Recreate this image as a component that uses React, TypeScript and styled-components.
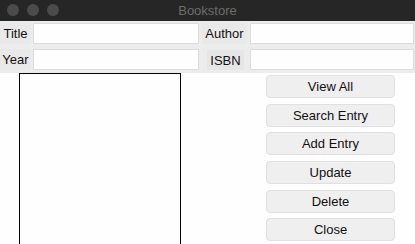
import React from "react"
import styled, { createGlobalStyle } from "styled-components"

const GlobalStyle = createGlobalStyle`
  html, body {
    margin: 0;
    padding: 0;
    background: #fefefe;
    overflow: hidden;
  }
  body {
    font-family: "Liberation Sans", Arial, sans-serif;
    font-size: 13px;
    color: #111;
  }
`

const buttons = ["View All", "Search Entry", "Add Entry", "Update", "Delete", "Close"]

const App = () => {
  return (
    <Window>
      <GlobalStyle />
      <TitleBar>
        <Lights>
          <Light />
          <Light />
          <Light />
        </Lights>
        <WindowTitle>Bookstore</WindowTitle>
      </TitleBar>
      <Form>
        <Label>Title</Label>
        <Entry />
        <Label>Author</Label>
        <Entry />
        <Label>Year</Label>
        <Entry />
        <Label boxed>ISBN</Label>
        <Entry />
      </Form>
      <Body>
        <ListBox />
        <ButtonColumn>
          {buttons.map(b => (
            <Button key={b}>{b}</Button>
          ))}
        </ButtonColumn>
      </Body>
    </Window>
  )
}

export default App

const Window = styled.div`
  width: 415px;
  height: 244px;
  overflow: hidden;
  background: #fefefe;
`

const TitleBar = styled.div`
  position: relative;
  height: 21px;
  background: #262626;
  display: flex;
  align-items: center;
  justify-content: center;
`

const Lights = styled.div`
  position: absolute;
  left: 7px;
  top: 4px;
  display: flex;
  gap: 8px;
`

const Light = styled.span`
  width: 12px;
  height: 12px;
  border-radius: 50%;
  background: #4b4b4b;
`

const WindowTitle = styled.span`
  color: #6c6c6c;
  font-size: 13px;
  line-height: 21px;
`

const Form = styled.div`
  display: grid;
  grid-template-columns: 31px 165px 45px 164px;
  grid-template-rows: 21px 21px;
  column-gap: 3px;
  row-gap: 5px;
  padding: 2px 2px 3px 0;
  background: #ececec;

  & > :nth-child(2),
  & > :nth-child(6) {
    margin-left: -1px;
  }
`

const Label = styled.div<{ boxed?: boolean }>`
  display: flex;
  align-items: center;
  justify-content: center;
  margin: ${p => (p.boxed ? "1px 3px 0 5px" : "0")};
  background: ${p => (p.boxed ? "#e6e6e6" : "#e9e9e9")};
  white-space: nowrap;
`

const Entry = styled.div`
  box-sizing: border-box;
  height: 21px;
  background: #fefefe;
  border: 1px solid #dcdcdc;
`

const Body = styled.div`
  display: flex;
  align-items: flex-start;
`

const ListBox = styled.div`
  box-sizing: border-box;
  margin-left: 19px;
  width: 162px;
  height: 180px;
  border: 1px solid #000;
  background: #fefefe;
`

const ButtonColumn = styled.div`
  display: flex;
  flex-direction: column;
  gap: 5.7px;
  margin-left: 85px;
  padding-top: 2px;
`

const Button = styled.div`
  box-sizing: border-box;
  width: 129px;
  height: 23px;
  display: flex;
  align-items: center;
  justify-content: center;
  background: #efefef;
  border: 1px solid #e0e0e0;
  border-radius: 4px;
  color: #111;
`
